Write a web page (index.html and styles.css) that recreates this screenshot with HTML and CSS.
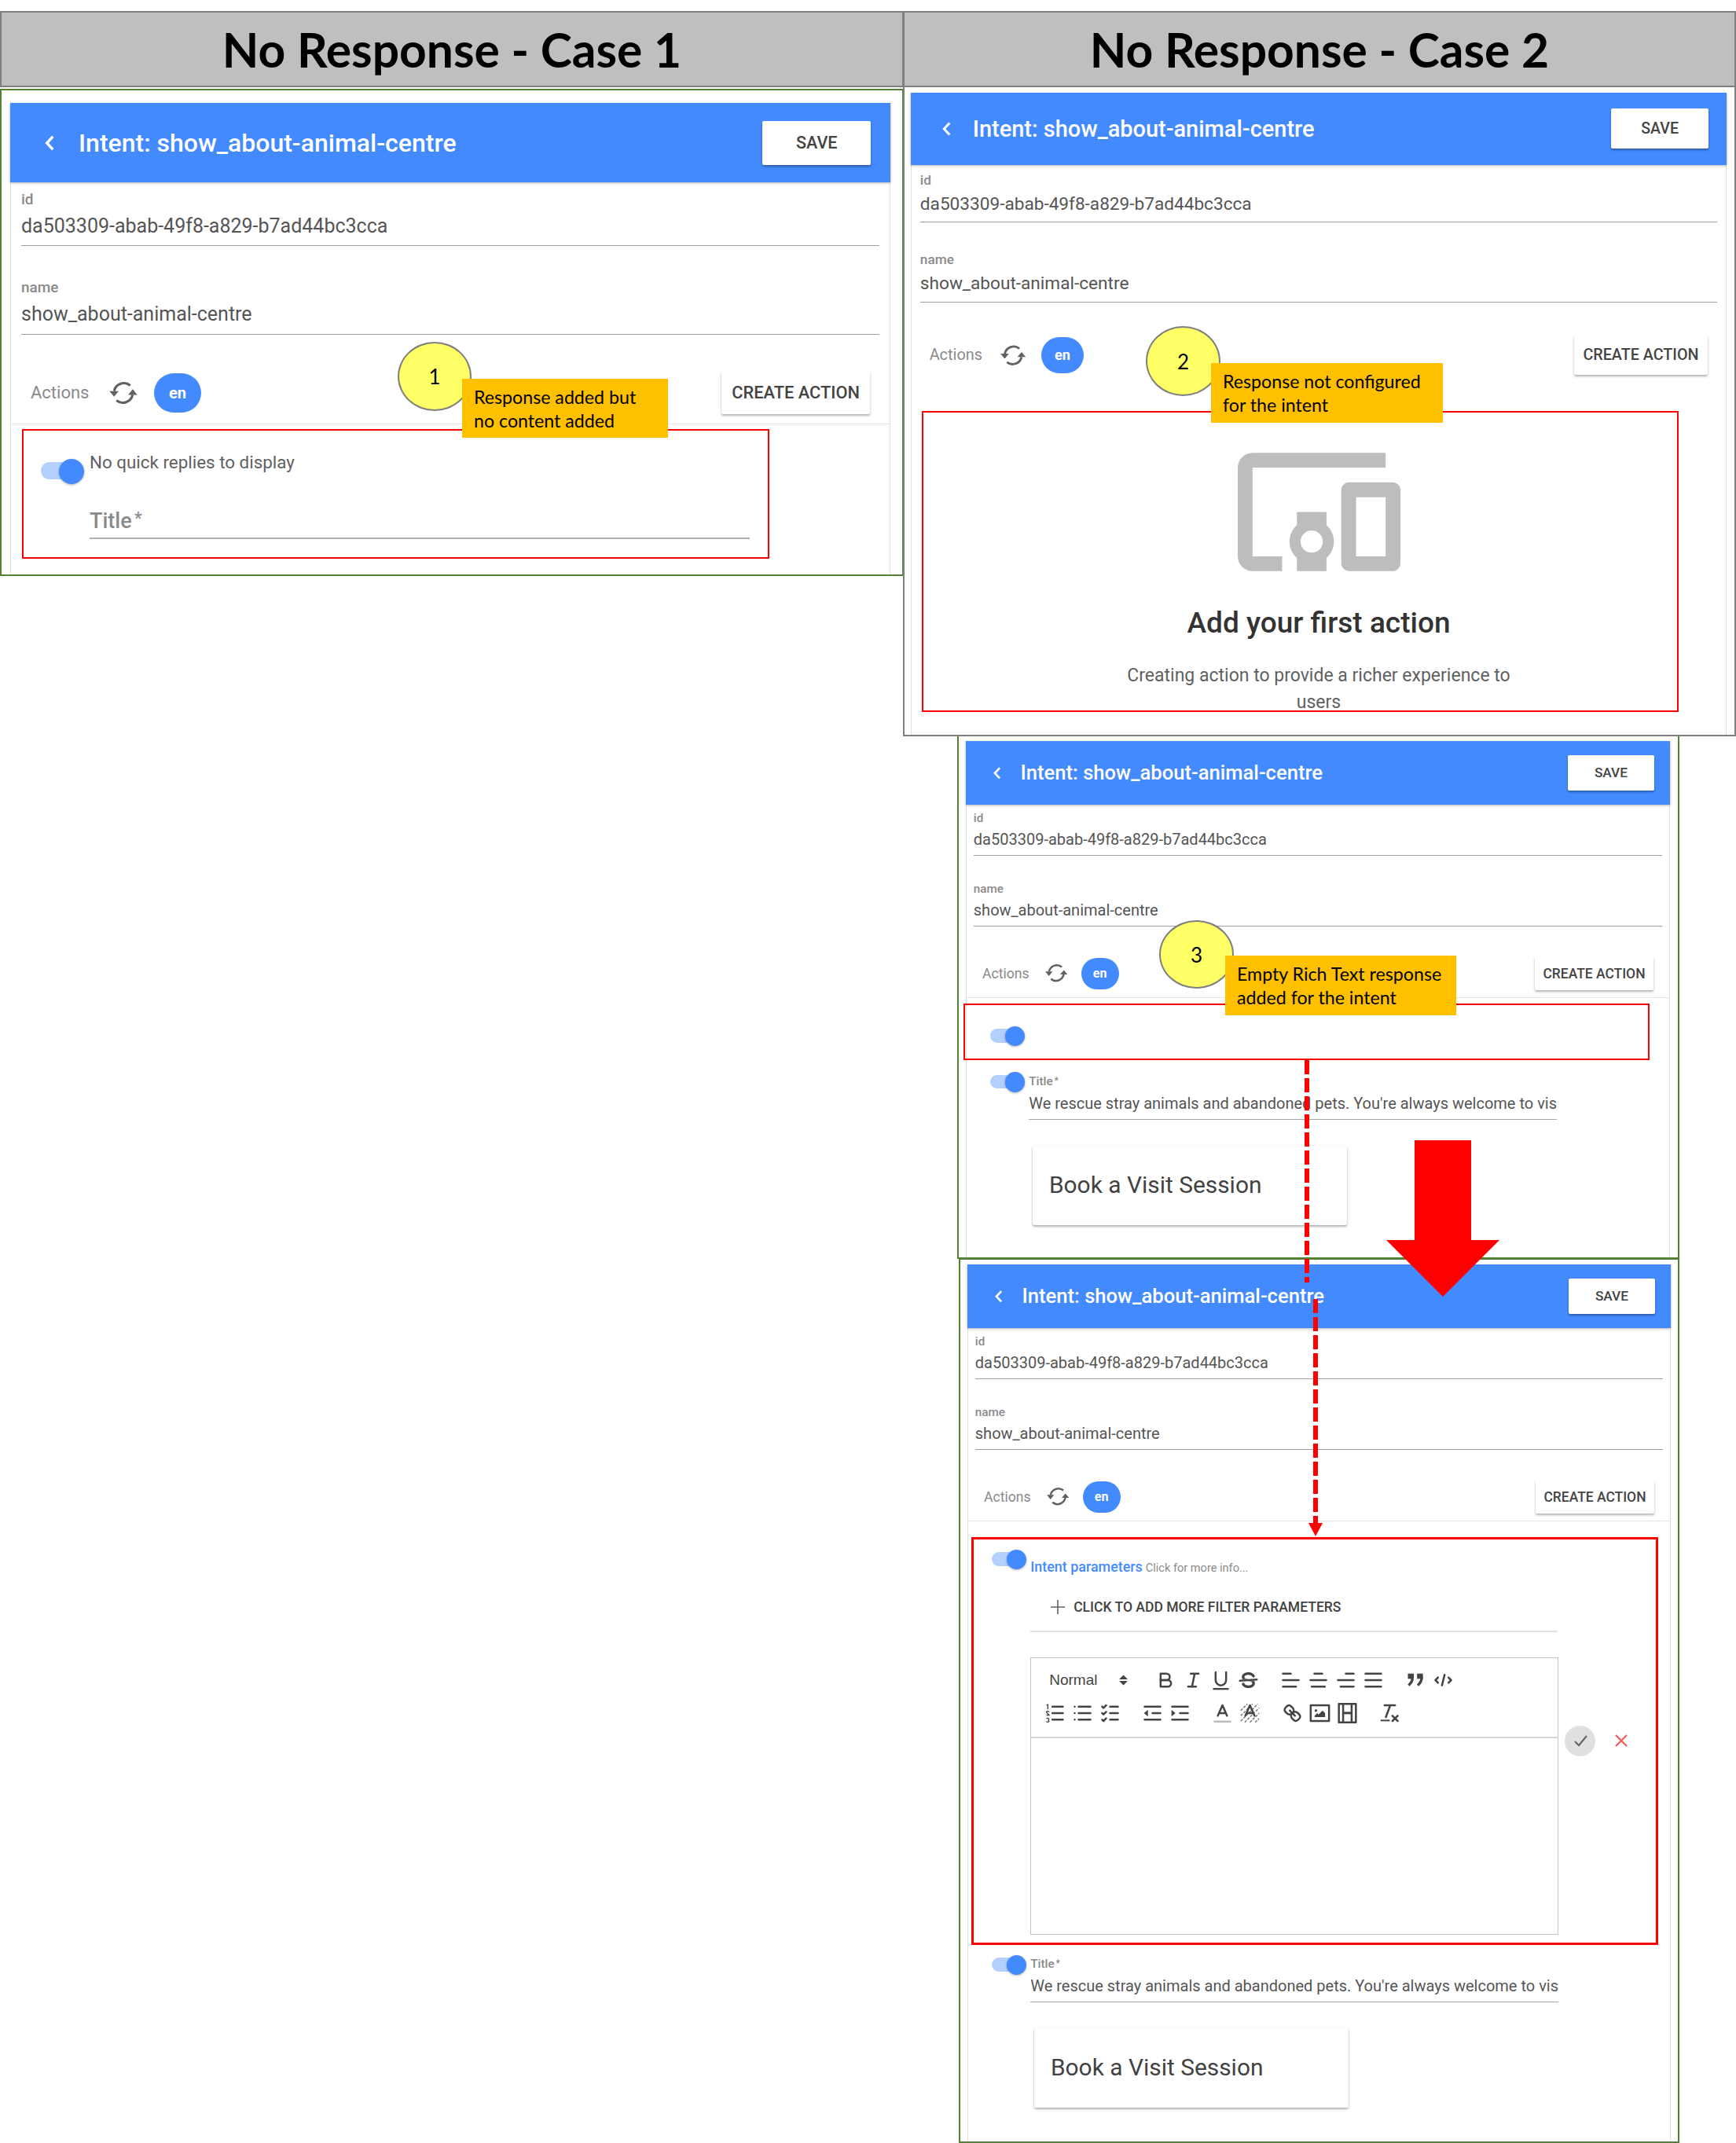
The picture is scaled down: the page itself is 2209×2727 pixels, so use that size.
FILE: index.html
```html
<!DOCTYPE html>
<html lang="en">
<head>
    <meta charset="UTF-8">
    <meta name="viewport" content="width=device-width, initial-scale=1.0">
    <title>No Response Cases</title>
    <link rel="stylesheet" href="styles.css">
</head>
<body>
<svg class="sprite" width="0" height="0">
    <symbol id="i-back" viewBox="0 0 12 20"><polyline points="9.5 2.5 2.5 10 9.5 17.5"/></symbol>
    <symbol id="i-sync" viewBox="0 0 24 24">
        <path class="sync-line" d="M17.5 6A8 8 0 0 0 4.6 10.5"/>
        <polygon class="sync-head" points="0.8 10.5 8.2 10.5 4.5 15"/>
        <path class="sync-line" d="M6.5 18A8 8 0 0 0 19.4 13.5"/>
        <polygon class="sync-head" points="15.8 13.5 23.2 13.5 19.5 9"/>
    </symbol>
</svg>

<div class="sheet">
    <div class="col-left">
        <div class="case-head"><h1>No Response - Case 1</h1></div>
        <div class="frame frame-one">
            <div class="card">
                <div class="card-head">
                    <svg class="back-icon"><use href="#i-back"/></svg>
                    <span class="head-title">Intent: show_about-animal-centre</span>
                    <button class="save-btn" type="button">SAVE</button>
                </div>
                <div class="fields">
                    <div class="field">
                        <div class="field-label">id</div>
                        <div class="field-value">da503309-abab-49f8-a829-b7ad44bc3cca</div>
                    </div>
                    <div class="field">
                        <div class="field-label">name</div>
                        <div class="field-value">show_about-animal-centre</div>
                    </div>
                </div>
                <div class="actions-row">
                    <span class="actions-label">Actions</span>
                    <svg class="sync-icon"><use href="#i-sync"/></svg>
                    <span class="lang-pill">en</span>
                    <button class="create-btn" type="button">CREATE ACTION</button>
                </div>
                <div class="response-row response-one">
                    <span class="toggle"><span class="knob"></span></span>
                    <div class="response-body">
                        <div class="muted-line">No quick replies to display</div>
                        <div class="title-empty">Title<span class="star">*</span></div>
                    </div>
                </div>
            </div>
        </div>
    </div>

    <div class="col-right">
        <div class="case-box">
            <div class="case-head case-head-two"><h1>No Response - Case 2</h1></div>
            <div class="card card-two">
                <div class="card-head">
                    <svg class="back-icon"><use href="#i-back"/></svg>
                    <span class="head-title">Intent: show_about-animal-centre</span>
                    <button class="save-btn" type="button">SAVE</button>
                </div>
                <div class="fields">
                    <div class="field">
                        <div class="field-label">id</div>
                        <div class="field-value">da503309-abab-49f8-a829-b7ad44bc3cca</div>
                    </div>
                    <div class="field">
                        <div class="field-label">name</div>
                        <div class="field-value">show_about-animal-centre</div>
                    </div>
                </div>
                <div class="actions-row actions-plain">
                    <span class="actions-label">Actions</span>
                    <svg class="sync-icon"><use href="#i-sync"/></svg>
                    <span class="lang-pill">en</span>
                    <button class="create-btn" type="button">CREATE ACTION</button>
                </div>
                <div class="empty-state">
                    <svg class="empty-icon" viewBox="1 4 22 16"><path d="M3 6h18V4H3c-1.1 0-2 .9-2 2v12c0 1.1.9 2 2 2h4v-2H3V6zm10 6H9v1.78c-.61.55-1 1.33-1 2.22s.39 1.67 1 2.22V20h4v-1.78c.61-.55 1-1.34 1-2.22s-.39-1.67-1-2.22V12zm-2 5.5c-.83 0-1.5-.67-1.5-1.5s.67-1.5 1.5-1.5 1.5.67 1.5 1.5-.67 1.5-1.5 1.5zM22 8h-6c-.5 0-1 .5-1 1v10c0 .5.5 1 1 1h6c.5 0 1-.5 1-1V9c0-.5-.5-1-1-1zm-1 10h-4v-8h4v8z"/></svg>
                    <h2>Add your first action</h2>
                    <p>Creating action to provide a richer experience to users</p>
                </div>
            </div>
        </div>

        <div class="frame frame-three">
            <div class="card">
                <div class="card-head">
                    <svg class="back-icon"><use href="#i-back"/></svg>
                    <span class="head-title">Intent: show_about-animal-centre</span>
                    <button class="save-btn" type="button">SAVE</button>
                </div>
                <div class="fields">
                    <div class="field">
                        <div class="field-label">id</div>
                        <div class="field-value">da503309-abab-49f8-a829-b7ad44bc3cca</div>
                    </div>
                    <div class="field">
                        <div class="field-label">name</div>
                        <div class="field-value">show_about-animal-centre</div>
                    </div>
                </div>
                <div class="actions-row">
                    <span class="actions-label">Actions</span>
                    <svg class="sync-icon"><use href="#i-sync"/></svg>
                    <span class="lang-pill">en</span>
                    <button class="create-btn" type="button">CREATE ACTION</button>
                </div>
                <div class="response-row response-blank">
                    <span class="toggle"><span class="knob"></span></span>
                </div>
                <div class="response-row response-filled">
                    <span class="toggle"><span class="knob"></span></span>
                    <div class="response-body">
                        <div class="small-label">Title<span class="star">*</span></div>
                        <div class="title-value">We rescue stray animals and abandoned pets. You're always welcome to vis</div>
                        <div class="reply-card">Book a Visit Session</div>
                    </div>
                </div>
            </div>
        </div>

        <div class="frame frame-four">
            <div class="card">
                <div class="card-head">
                    <svg class="back-icon"><use href="#i-back"/></svg>
                    <span class="head-title">Intent: show_about-animal-centre</span>
                    <button class="save-btn" type="button">SAVE</button>
                </div>
                <div class="fields">
                    <div class="field">
                        <div class="field-label">id</div>
                        <div class="field-value">da503309-abab-49f8-a829-b7ad44bc3cca</div>
                    </div>
                    <div class="field">
                        <div class="field-label">name</div>
                        <div class="field-value">show_about-animal-centre</div>
                    </div>
                </div>
                <div class="actions-row">
                    <span class="actions-label">Actions</span>
                    <svg class="sync-icon"><use href="#i-sync"/></svg>
                    <span class="lang-pill">en</span>
                    <button class="create-btn" type="button">CREATE ACTION</button>
                </div>
                <div class="response-row response-editing">
                    <span class="toggle"><span class="knob"></span></span>
                    <div class="response-wide">
                        <div class="params-line"><span class="params-title">Intent parameters</span> <span class="params-hint">Click for more info...</span></div>
                        <div class="add-filter">
                            <svg class="plus-icon" viewBox="0 0 18 18"><path d="M9 0v18M0 9h18"/></svg>
                            <span>CLICK TO ADD MORE FILTER PARAMETERS</span>
                        </div>
                        <div class="editor-row">
                            <div class="editor">
                                <div class="toolbar">
                                    <div class="tool-row">
                                        <span class="picker">Normal<svg class="picker-arrows" viewBox="0 0 10 12"><polygon points="5 0 10 5 0 5"/><polygon points="5 12 10 7 0 7"/></svg></span>
                                        <span class="tool-group">
                                            <svg class="tool" viewBox="0 0 18 18"><path class="ql-stroke" d="M5,4H9.5A2.5,2.5,0,0,1,12,6.5v0A2.5,2.5,0,0,1,9.5,9H5V4Z"/><path class="ql-stroke" d="M5,9h5.5A2.5,2.5,0,0,1,13,11.5v0A2.5,2.5,0,0,1,10.5,14H5V9Z"/></svg>
                                            <svg class="tool" viewBox="0 0 18 18"><path class="ql-stroke" d="M7 4h6M5 14h6M8 14l2-10"/></svg>
                                            <svg class="tool" viewBox="0 0 18 18"><path class="ql-stroke" d="M5,3V9a4,4,0,0,0,4,4h0a4,4,0,0,0,4-4V3"/><rect class="ql-fill" height="1.4" width="12" x="3" y="15"/></svg>
                                            <svg class="tool" viewBox="0 0 18 18"><path class="ql-stroke" d="M15.5 8.5l-13 1"/><path class="ql-fill" d="M9.007,8C6.542,7.791,6,7.519,6,6.5,6,5.792,7.283,5,9,5c1.571,0,2.765.679,2.969,1.309a1,1,0,0,0,1.9-.617C13.356,4.106,11.354,3,9,3,6.2,3,4,4.538,4,6.5a3.2,3.2,0,0,0,.5,1.843Z"/><path class="ql-fill" d="M8.984,10C11.457,10.208,12,10.479,12,11.5c0,.708-1.283,1.5-3,1.5-1.571,0-2.765-.679-2.969-1.309a1,1,0,1,0-1.9.617C4.644,13.894,6.646,15,9,15c2.8,0,5-1.538,5-3.5a3.2,3.2,0,0,0-.5-1.843Z"/></svg>
                                        </span>
                                        <span class="tool-group">
                                            <svg class="tool" viewBox="0 0 18 18"><path class="ql-stroke" d="M3 9h12M3 14h10M3 4h6"/></svg>
                                            <svg class="tool" viewBox="0 0 18 18"><path class="ql-stroke" d="M3 9h12M4 14h10M6 4h6"/></svg>
                                            <svg class="tool" viewBox="0 0 18 18"><path class="ql-stroke" d="M3 9h12M5 14h10M9 4h6"/></svg>
                                            <svg class="tool" viewBox="0 0 18 18"><path class="ql-stroke" d="M3 9h12M3 14h12M3 4h12"/></svg>
                                        </span>
                                        <span class="tool-group">
                                            <svg class="tool" viewBox="0 0 18 18"><rect class="ql-fill" height="4" width="4.5" x="3" y="4"/><rect class="ql-fill" height="4" width="4.5" x="10" y="4"/><path class="ql-thick" d="M6.5 7c0 3.5-2.5 5.500-3 6M13.500 7c0 3.500-2.500 5.500-3 6"/></svg>
                                            <svg class="tool" viewBox="0 0 18 18"><path class="ql-stroke" d="M5 7L3 9l2 2M13 7l2 2-2 2M10 5L8 13"/></svg>
                                        </span>
                                    </div>
                                    <div class="tool-row">
                                        <span class="tool-group">
                                            <svg class="tool" viewBox="0 0 18 18"><path class="ql-stroke" d="M7 4h8M7 9h8M7 14h8"/><path class="ql-num" d="M3.5 6V2.500l-1 .5M2.500 10.500h2c-.2-.6-2-1.200-2-2.400.2-.8 1.700-.8 1.900.2M2.500 13.300c.3-.7 1.800-.6 1.800.3 0 .5-.4.7-.8.7.5 0 .9.3.9.8-.2.9-1.700.9-1.900.2"/></svg>
                                            <svg class="tool" viewBox="0 0 18 18"><path class="ql-stroke" d="M6 4h9M6 9h9M6 14h9M3 4h.01M3 9h.01M3 14h.01"/></svg>
                                            <svg class="tool" viewBox="0 0 18 18"><path class="ql-stroke" d="M9 4h6M9 9h6M9 14h6M3 4l1 1 2-2M3 9l1 1 2-2M3 14l1 1 2-2"/></svg>
                                        </span>
                                        <span class="tool-group">
                                            <svg class="tool" viewBox="0 0 18 18"><path class="ql-stroke" d="M3 14h12M3 4h12M9 9h6"/><polygon class="ql-fill" points="5.5 6.5 5.5 11.5 2.5 9"/></svg>
                                            <svg class="tool" viewBox="0 0 18 18"><path class="ql-stroke" d="M3 14h12M3 4h12M9 9h6"/><polygon class="ql-fill" points="2.5 6.5 2.5 11.5 5.5 9"/></svg>
                                        </span>
                                        <span class="tool-group">
                                            <svg class="tool" viewBox="0 0 18 18"><path class="ql-stroke ql-light" d="M3 15.5h12"/><path class="ql-stroke" d="M5.5 11L9 3l3.5 8M6.4 9h5.200"/></svg>
                                            <svg class="tool" viewBox="0 0 18 18"><path class="ql-hatch" d="M2 7l5-5M2 11L11 2M2 15L15 2M5 16L16 5M9 16l7-7M13 16l3-3"/><path class="ql-stroke" d="M5.5 11L9 3l3.5 8M6.4 9h5.200"/></svg>
                                        </span>
                                        <span class="tool-group">
                                            <svg class="tool" viewBox="0 0 18 18"><path class="ql-stroke" d="M7 7l4 4"/><path class="ql-stroke" d="M8.9,4.577a3.476,3.476,0,0,1,.36,4.679A3.476,3.476,0,0,1,4.577,8.9C3.185,7.5,2.035,6.4,4.217,4.217S7.5,3.185,8.9,4.577Z"/><path class="ql-stroke" d="M13.423,9.1a3.476,3.476,0,0,0-4.679-.36,3.476,3.476,0,0,0,.36,4.679c1.392,1.392,2.5,2.542,4.679.36S14.815,10.5,13.423,9.1Z"/></svg>
                                            <svg class="tool" viewBox="0 0 18 18"><rect class="ql-stroke" height="12" width="14" x="2" y="3"/><circle class="ql-fill" cx="6" cy="7" r="1"/><polygon class="ql-fill" points="5 12 5 11 7 9 8 10 11 7 13 9 13 12"/></svg>
                                            <svg class="tool" viewBox="0 0 18 18"><rect class="ql-stroke" height="14" width="13" x="2.5" y="2"/><rect class="ql-fill" height="14" width="1.5" x="5" y="2"/><rect class="ql-fill" height="14" width="1.5" x="11.5" y="2"/><rect class="ql-fill" height="1.8" width="6" x="6" y="8"/></svg>
                                        </span>
                                        <span class="tool-group">
                                            <svg class="tool" viewBox="0 0 18 18"><path class="ql-stroke" d="M5 3h8M6 12L9.35 3M11 11l4 4M15 11l-4 4"/><rect class="ql-fill" height="1.2" width="7" x="2" y="14"/></svg>
                                        </span>
                                    </div>
                                </div>
                                <div class="editor-area"></div>
                            </div>
                            <div class="editor-actions">
                                <span class="confirm-btn"><svg viewBox="0 0 24 24"><path d="M5 13l5 5L20 6"/></svg></span>
                                <svg class="cancel-icon" viewBox="0 0 18 18"><path d="M2 2l14 14M16 2L2 16"/></svg>
                            </div>
                        </div>
                    </div>
                </div>
                <div class="response-row response-filled response-last">
                    <span class="toggle"><span class="knob"></span></span>
                    <div class="response-body">
                        <div class="small-label">Title<span class="star">*</span></div>
                        <div class="title-value">We rescue stray animals and abandoned pets. You're always welcome to vis</div>
                        <div class="reply-card">Book a Visit Session</div>
                    </div>
                </div>
            </div>
        </div>
    </div>

    <!-- notes drawn over the screenshots -->
    <div class="red-box red-one"></div>
    <div class="red-box red-two"></div>
    <div class="red-box red-three"></div>
    <div class="red-box red-four"></div>

    <div class="badge badge-one">1</div>
    <div class="badge badge-two">2</div>
    <div class="badge badge-three">3</div>

    <div class="callout callout-one">Response added but<br>no content added</div>
    <div class="callout callout-two">Response not configured<br>for the intent</div>
    <div class="callout callout-three">Empty Rich Text response<br>added for the intent</div>

    <svg class="arrows" viewBox="0 0 2209 2727">
        <path class="dash" d="M1663 1349V1632"/>
        <polygon class="red-fill" points="1800,1451 1872,1451 1872,1578 1908,1578 1836,1650 1764,1578 1800,1578"/>
        <path class="dash" d="M1674 1653V1938"/>
        <polygon class="red-fill" points="1665,1938 1683,1938 1674,1955"/>
    </svg>
</div>
</body>
</html>
```
FILE: styles.css
```css
html, body {
    margin: 0;
    padding: 0;
    background-color: #fff;
}

body {
    font-family: Roboto, Arial, sans-serif;
    color: #424242;
}

.sprite {
    position: absolute;
}

.sheet {
    position: relative;
    display: flex;
    width: 2209px;
    height: 2727px;
    overflow: hidden;
}

.col-left {
    flex: none;
    width: 1150px;
    padding-top: 14px;
    box-sizing: border-box;
}

.col-right {
    flex: none;
    width: 1060px;
    margin-left: -1px;
    padding-top: 14px;
    box-sizing: border-box;
}

/* grey title bars */
.case-head {
    height: 97px;
    box-sizing: border-box;
    background-color: #bfbfbf;
    border: 2px solid #7f7f7f;
    display: flex;
    align-items: center;
    justify-content: center;
}

.case-head h1 {
    margin: 0;
    font-family: Lato, "Open Sans", sans-serif;
    font-weight: 700;
    font-size: 60.5px;
    color: #000;
}

.case-head-two {
    height: 95px;
    flex: none;
    border-width: 0 0 2px;
}

.case-box {
    height: 923px;
    box-sizing: border-box;
    border: 2px solid #7f7f7f;
    display: flex;
    flex-direction: column;
    position: relative;
    z-index: 1;
    background-color: #fff;
}

/* green frames round the screenshots */
.frame {
    box-sizing: border-box;
    border: 2px solid #548235;
    display: flex;
}

.frame-one {
    height: 620px;
    margin-top: 2px;
    padding: 16px 15px 0 11px;
    font-size: 20px;
}

.frame-three {
    height: 665px;
    margin-left: 69px;
    width: 919px;
    padding: 6px 10px 0 9px;
    font-size: 16px;
    border-top: none;
}

.frame-four {
    height: 1126px;
    margin-top: -1px;
    margin-left: 71px;
    width: 917px;
    padding: 6px 9px 0 9px;
    font-size: 16px;
}

/* the intent form, sized in em so each screenshot can scale it */
.card {
    flex: 1;
    min-width: 0;
    display: flex;
    flex-direction: column;
    border: solid #e0e0e0;
    border-width: 0 1px;
    background-color: #fff;
}

.card-two {
    font-size: 18.1px;
    margin: 7px 10px 0 8px;
}

.card-head {
    flex: none;
    height: 5.06em;
    box-sizing: border-box;
    margin: 0 -1px;
    padding: 0 1.25em 0 2.15em;
    background-color: #448aff;
    display: flex;
    align-items: center;
    box-shadow: 0 1px 3px rgba(0, 0, 0, 0.3);
}

.back-icon {
    width: 0.75em;
    height: 1.1em;
    margin-right: 1.45em;
    fill: none;
    stroke: #fff;
    stroke-width: 3;
}

.head-title {
    font-size: 1.6em;
    font-weight: 500;
    color: #fff;
    flex: 1;
    white-space: nowrap;
}

.save-btn {
    font-size: 1.08em;
    width: 6.37em;
    height: 2.6em;
    padding: 0;
    border: none;
    border-radius: 2px;
    background-color: #fff;
    font-family: Roboto, Arial, sans-serif;
    font-weight: 500;
    color: #444;
    box-shadow: 0 2px 3px rgba(0, 0, 0, 0.35);
}

.fields {
    padding: 0 0.55em;
}

.frame-one .fields {
    padding: 0 0.65em;
}

.card-two .fields {
    padding: 0 0.6em;
}

.field {
    padding-top: 0.44em;
    padding-bottom: 0.375em;
    border-bottom: 1px solid #9e9e9e;
}

.field + .field {
    margin-top: 1.56em;
}

.field-label {
    height: 1.32em;
    line-height: 1.32em;
    font-size: 0.95em;
    font-weight: 500;
    color: #8a8a8a;
}

.field-value {
    height: 1.4em;
    line-height: 1.4em;
    margin-top: 0.15em;
    font-size: 1.25em;
    color: #555;
    white-space: nowrap;
}

.actions-row {
    flex: none;
    margin-top: 2.34em;
    padding: 0 1.25em 0.56em 1.25em;
    border-bottom: 1px solid #e4e4e4;
    display: flex;
    align-items: center;
}

.actions-plain {
    border-bottom: none;
}

.actions-label {
    width: 4.5em;
    font-size: 1.1em;
    color: #8a8a8a;
}

.sync-icon {
    width: 1.9em;
    height: 1.9em;
}

.sync-line {
    fill: none;
    stroke: #616161;
    stroke-width: 2;
}

.sync-head {
    fill: #616161;
}

.lang-pill {
    width: 3em;
    height: 2.5em;
    line-height: 2.5em;
    margin-left: 1em;
    border-radius: 1.5em;
    background-color: #448aff;
    color: #fff;
    font-weight: 700;
    font-size: 1em;
    text-align: center;
}

.create-btn {
    margin-left: auto;
    width: 8.66em;
    height: 2.52em;
    padding: 0;
    border: none;
    border-radius: 2px;
    background-color: #fff;
    font-family: Roboto, Arial, sans-serif;
    font-size: 1.09em;
    font-weight: 500;
    color: #444;
    box-shadow: 0 2px 3px rgba(0, 0, 0, 0.3);
}

/* switches and responses */
.response-row {
    display: flex;
    align-items: flex-start;
    padding-left: 1.9em;
}

.toggle {
    flex: none;
    position: relative;
    width: 2.75em;
    height: 1.56em;
    margin-right: 0.3em;
}

.toggle::before {
    content: "";
    position: absolute;
    left: 0;
    right: 0.4em;
    top: 0.22em;
    height: 1.12em;
    border-radius: 0.6em;
    background-color: #b4d0ff;
}

.knob {
    position: absolute;
    right: 0;
    top: 0;
    width: 1.6em;
    height: 1.6em;
    border-radius: 50%;
    background-color: #448aff;
    box-shadow: 0 1px 3px rgba(0, 0, 0, 0.3);
}

.response-body {
    width: 42em;
}

.response-one {
    padding-top: 2.2em;
}

.response-one .response-body {
    padding-left: 0.05em;
}

.muted-line {
    margin-top: -0.45em;
    line-height: 1.4em;
    font-size: 1.12em;
    color: #616161;
}

.title-empty {
    margin-top: 1.55em;
    padding-bottom: 0.2em;
    border-bottom: 2px solid #b0b0b0;
    font-size: 1.35em;
    font-weight: 500;
    color: #8a8a8a;
}

.star {
    font-size: 0.8em;
    margin-left: 0.15em;
    vertical-align: 0.2em;
}

.response-blank {
    padding-top: 2.2em;
    height: 1.6em;
}

.response-filled {
    padding-top: 2.05em;
}

.small-label {
    font-size: 0.96em;
    font-weight: 500;
    color: #8a8a8a;
    line-height: 1.2em;
    margin-top: 0.1em;
}

.title-value {
    margin-top: 0.32em;
    padding-bottom: 0.4em;
    line-height: 1.2em;
    height: 1.2em;
    font-size: 1.25em;
    color: #555;
    border-bottom: 1px solid #a8a8a8;
    white-space: nowrap;
}

.reply-card {
    font-size: 1.87em;
    width: 13.37em;
    height: 3.37em;
    line-height: 3.37em;
    margin: 1.1em 0 0 0.16em;
    padding-left: 0.7em;
    box-sizing: border-box;
    color: #424242;
    box-shadow: 0 2px 3px rgba(0, 0, 0, 0.3), 0 0 2px rgba(0, 0, 0, 0.08);
    border-radius: 2px;
}

/* case 2 empty state */
.empty-state {
    padding-top: 4.9em;
    text-align: center;
}

.empty-icon {
    display: block;
    width: 207px;
    height: 151px;
    margin: 0 auto;
    fill: #bdbdbd;
}

.empty-state h2 {
    margin: 30px 0 0;
    font-size: 37px;
    font-weight: 500;
    color: #333;
    line-height: 72px;
}

.empty-state p {
    width: 510px;
    margin: 14px auto 0;
    font-size: 23px;
    line-height: 34px;
    color: #616161;
}

/* case 3b editor */
.response-editing {
    padding-top: 2.2em;
}

.response-wide {
    flex: 1;
}

.params-line {
    margin-top: 0.72em;
    line-height: 1.4em;
}

.params-title {
    font-size: 1.12em;
    font-weight: 500;
    color: #448aff;
}

.params-hint {
    font-size: 0.91em;
    color: #8a8a8a;
}

.add-filter {
    display: flex;
    align-items: center;
    height: 70px;
    box-sizing: border-box;
    padding: 8px 0 0 26px;
    width: 671px;
    border-bottom: 2px solid #e4e4e4;
    font-size: 1.095em;
    font-weight: 500;
    color: #424242;
}

.plus-icon {
    width: 18px;
    height: 18px;
    margin-right: 11px;
    fill: none;
    stroke: #616161;
    stroke-width: 1.6;
}

.editor-row {
    display: flex;
    margin-top: 32px;
}

.editor {
    width: 672px;
    height: 353px;
    box-sizing: border-box;
    border: 1px solid #c4c4c4;
    display: flex;
    flex-direction: column;
    flex: none;
}

.toolbar {
    height: 102px;
    box-sizing: border-box;
    padding: 7px 0 0 13px;
    border-bottom: 2px solid #d8d8d8;
}

.tool-row {
    display: flex;
    align-items: center;
    height: 42px;
}

.picker {
    width: 122px;
    margin-right: 19px;
    padding-left: 10px;
    box-sizing: border-box;
    font-family: "Liberation Sans", Arial, sans-serif;
    font-size: 19px;
    color: #444;
    display: flex;
    align-items: center;
    justify-content: space-between;
    padding-right: 12px;
}

.picker-arrows {
    width: 11px;
    height: 14px;
    fill: #444;
}

.tool-group {
    display: flex;
    margin-right: 19px;
}

.tool {
    width: 30px;
    height: 30px;
    padding: 0 2.5px;
    flex: none;
}

.ql-stroke {
    fill: none;
    stroke: #444;
    stroke-width: 1.5;
    stroke-linecap: round;
    stroke-linejoin: round;
}

.ql-thick {
    fill: none;
    stroke: #444;
    stroke-width: 2;
}

.ql-light {
    stroke: #bbb;
}

.ql-num {
    fill: none;
    stroke: #444;
    stroke-width: 0.8;
}

.ql-hatch {
    fill: none;
    stroke: #777;
    stroke-width: 0.9;
    stroke-dasharray: 2 1;
}

.ql-fill {
    fill: #444;
}

.editor-area {
    flex: 1;
}

.editor-actions {
    display: flex;
    align-items: center;
    height: 39px;
    margin: 87px 0 0 8px;
}

.confirm-btn {
    width: 39px;
    height: 39px;
    border-radius: 50%;
    background-color: #e0e0e0;
    display: flex;
    align-items: center;
    justify-content: center;
}

.confirm-btn svg {
    width: 24px;
    height: 24px;
    fill: none;
    stroke: #616161;
    stroke-width: 2;
}

.cancel-icon {
    width: 18px;
    height: 18px;
    margin-left: 24px;
    fill: none;
    stroke: #ff5252;
    stroke-width: 2;
}

.response-last {
    padding-top: 0.8em;
    margin: 0.7em 1.2em 0 1.25em;
    padding-left: 0.65em;
    border-top: 2px solid #e4e4e4;
}

/* annotations */
.red-box {
    position: absolute;
    box-sizing: border-box;
    border: 2px solid #f00;
    z-index: 2;
}

.red-one { left: 28px; top: 546px; width: 951px; height: 165px; }
.red-two { left: 1173px; top: 523px; width: 963px; height: 383px; }
.red-three { left: 1226px; top: 1277px; width: 873px; height: 72px; }
.red-four { left: 1236px; top: 1956px; width: 874px; height: 519px; border-width: 3px; }

.badge {
    position: absolute;
    box-sizing: border-box;
    border: 2px solid #7f7f7f;
    border-radius: 50%;
    background-color: #ff6;
    display: flex;
    align-items: center;
    justify-content: center;
    font-family: Lato, "Open Sans", sans-serif;
    font-size: 26px;
    color: #000;
    z-index: 3;
}

.badge-one { left: 506px; top: 435px; width: 94px; height: 88px; }
.badge-two { left: 1458px; top: 415px; width: 95px; height: 89px; }
.badge-three { left: 1475px; top: 1171px; width: 95px; height: 87px; }

.callout {
    position: absolute;
    box-sizing: border-box;
    padding-left: 15px;
    background-color: #ffc000;
    display: flex;
    align-items: center;
    font-family: Lato, "Open Sans", sans-serif;
    font-size: 23.2px;
    line-height: 30px;
    color: #000;
    z-index: 4;
}

.callout-one { left: 588px; top: 482px; width: 262px; height: 75px; }
.callout-two { left: 1541px; top: 462px; width: 295px; height: 76px; }
.callout-three { left: 1559px; top: 1216px; width: 294px; height: 76px; }

.arrows {
    position: absolute;
    left: 0;
    top: 0;
    width: 2209px;
    height: 2727px;
    z-index: 2;
}

.dash {
    fill: none;
    stroke: #f00;
    stroke-width: 6;
    stroke-dasharray: 18 5;
}

.red-fill {
    fill: #f00;
}
```
